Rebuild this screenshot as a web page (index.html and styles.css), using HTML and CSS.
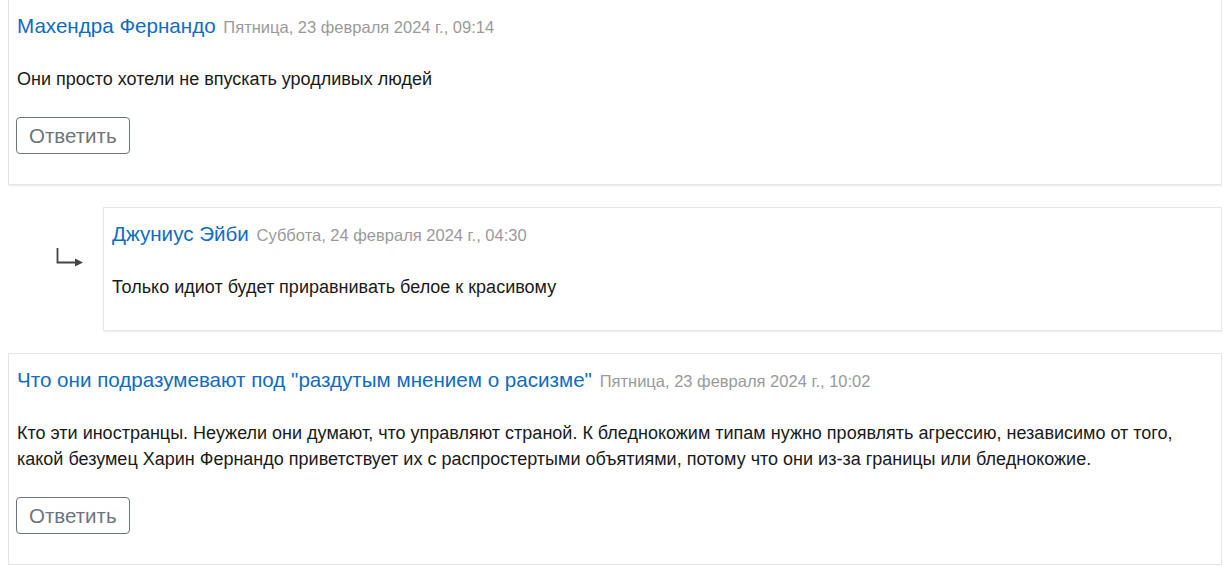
FILE: index.html
```html
<!DOCTYPE html>
<html lang="ru">
<head>
<meta charset="utf-8">
<link rel="stylesheet" href="styles.css">
</head>
<body>
<div class="thread">
  <article class="post">
    <header class="post-head">
      <a class="author" href="#">Махендра Фернандо</a>
      <span class="date">Пятница, 23 февраля 2024 г., 09:14</span>
    </header>
    <p class="post-text">Они просто хотели не впускать уродливых людей</p>
    <button class="reply-btn" type="button">Ответить</button>
  </article>

  <div class="reply-row">
    <div class="indent">
      <svg class="reply-arrow" width="28" height="19" viewBox="0 0 28 19" aria-hidden="true">
        <path d="M1.5 0 V14.5 H20" fill="none" stroke="#444" stroke-width="1.8"/>
        <polygon points="19,10.5 27,14.5 19,18.5" fill="#444"/>
      </svg>
    </div>
    <article class="post post-reply">
      <header class="post-head">
        <a class="author" href="#">Джуниус Эйби</a>
        <span class="date">Суббота, 24 февраля 2024 г., 04:30</span>
      </header>
      <p class="post-text">Только идиот будет приравнивать белое к красивому</p>
    </article>
  </div>

  <article class="post">
    <header class="post-head">
      <a class="author" href="#">Что они подразумевают под "раздутым мнением о расизме"</a>
      <span class="date">Пятница, 23 февраля 2024 г., 10:02</span>
    </header>
    <p class="post-text">Кто эти иностранцы. Неужели они думают, что управляют страной. К бледнокожим типам нужно проявлять агрессию, независимо от того, какой безумец Харин Фернандо приветствует их с распростертыми объятиями, потому что они из-за границы или бледнокожие.</p>
    <button class="reply-btn" type="button">Ответить</button>
  </article>
</div>
</body>
</html>
```

FILE: styles.css
```css
html, body {
  background: #ffffff;
}

body {
  margin: 0 8px;
  font-family: "Liberation Sans", Arial, sans-serif;
  color: #1d2125;
}

.thread {
  display: flex;
  flex-direction: column;
  gap: 22px;
  margin-top: -1px;
}

.post {
  background: #fff;
  border: 1px solid #e6e6e6;
  box-shadow: 1px 1px 2px rgba(0, 0, 0, 0.09);
  padding: 12px 8px 30px 8px;
  display: flex;
  flex-direction: column;
  align-items: flex-start;
}

.post-head {
  font-size: 20.6px;
  line-height: 28px;
  height: 28px;
  margin-bottom: 26px;
  white-space: nowrap;
}

.author {
  color: #0f6cbf;
  text-decoration: none;
}

.date {
  font-size: 16.5px;
  line-height: 1;
  color: #9a9a9a;
  margin-left: 2px;
}

.post-text {
  margin: 0 0 25px 0;
  font-size: 18px;
  line-height: 26px;
  color: #1a1a1a;
}

.post-reply .post-text {
  margin-bottom: 0;
}

.reply-btn {
  font-family: "Liberation Sans", Arial, sans-serif;
  font-size: 20.5px;
  color: #6c757d;
  background: #fff;
  border: 1px solid #6c757d;
  border-radius: 4px;
  height: 37px;
  padding: 0 12px;
  margin-left: -1px;
}

.reply-row {
  display: flex;
  align-items: flex-start;
}

.indent {
  width: 95px;
  flex: none;
  padding-top: 41px;
  padding-left: 48px;
  box-sizing: border-box;
}

.reply-arrow {
  display: block;
}

.post-reply {
  flex: 1;
  padding-bottom: 30px;
}
```
